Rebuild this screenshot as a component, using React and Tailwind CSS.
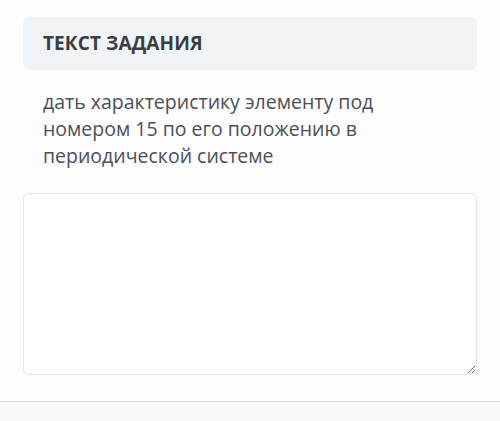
export default function App() {
  return (
    <div className="h-[421px] w-[500px] bg-[#fdfdfd] font-['Open_Sans',sans-serif]">
      <div className="px-[23px] pt-[17px]">
        <div className="flex h-[53px] items-center rounded-md bg-[#f1f4f6] px-5">
          <h2 className="text-[19px] font-bold tracking-[0.1px] text-[#393e43]">ТЕКСТ ЗАДАНИЯ</h2>
        </div>
        <p className="mt-[18px] w-[380px] px-5 text-[19.5px] leading-[27px] text-[#4b5056]">
          дать характеристику элементу под номером 15 по его положению в периодической системе
        </p>
        <textarea className="mt-[24px] block h-[182px] w-full rounded-md border border-[#e4e6e8] bg-white" />
      </div>
      <div className="mt-[26px] h-[20px] border-t border-[#dedede] bg-[#fafafa]" />
    </div>
  )
}
